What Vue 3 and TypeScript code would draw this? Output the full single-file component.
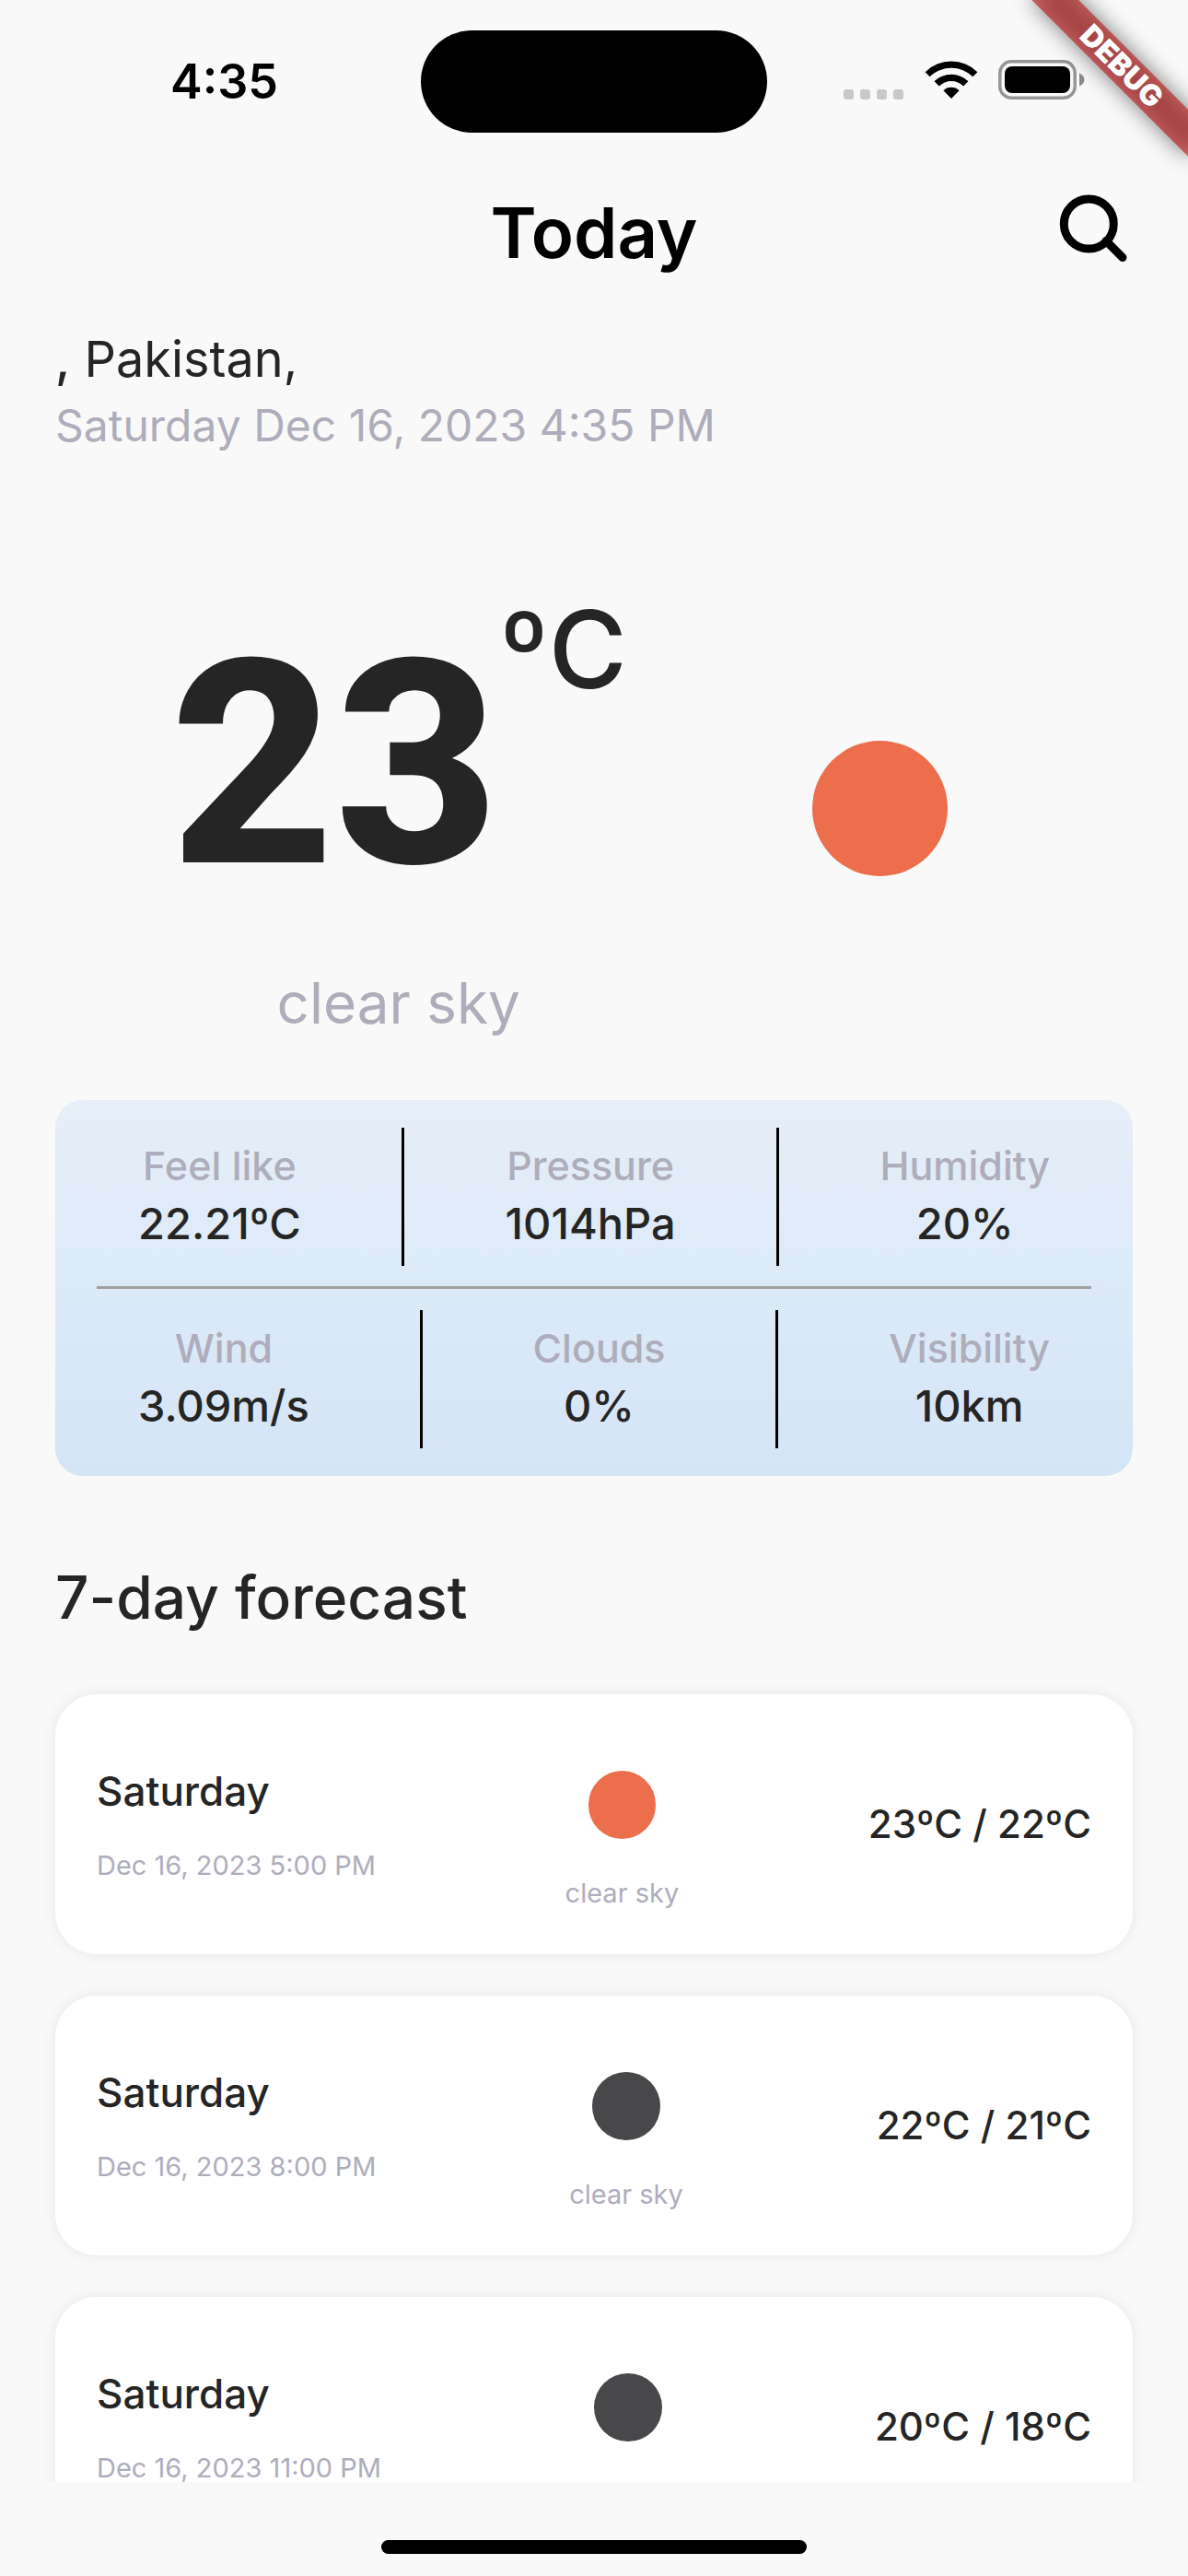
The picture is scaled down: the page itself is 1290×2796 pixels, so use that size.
<script setup lang="ts">
interface Metric {
  label: string
  value: string
}

interface Forecast {
  day: string
  time: string
  sky: string
  icon: 'sun' | 'moon'
  range: string
}

const metricRows: Metric[][] = [
  [
    { label: 'Feel like', value: '22.21ºC' },
    { label: 'Pressure', value: '1014hPa' },
    { label: 'Humidity', value: '20%' },
  ],
  [
    { label: 'Wind', value: '3.09m/s' },
    { label: 'Clouds', value: '0%' },
    { label: 'Visibility', value: '10km' },
  ],
]

const forecasts: Forecast[] = [
  { day: 'Saturday', time: 'Dec 16, 2023 5:00 PM', sky: 'clear sky', icon: 'sun', range: '23ºC / 22ºC' },
  { day: 'Saturday', time: 'Dec 16, 2023 8:00 PM', sky: 'clear sky', icon: 'moon', range: '22ºC / 21ºC' },
  { day: 'Saturday', time: 'Dec 16, 2023 11:00 PM', sky: 'clear sky', icon: 'moon', range: '20ºC / 18ºC' },
]
</script>

<template>
  <div class="screen">
    <div class="status-bar">
      <div class="status-side status-left">
        <span class="clock">4:35</span>
      </div>
      <div class="island"></div>
      <div class="status-side status-right">
        <span class="signal"><i></i><i></i><i></i><i></i></span>
        <svg class="wifi" viewBox="0 0 58 43" aria-hidden="true">
          <path d="M0.6 13.2A40.5 40.5 0 0 1 57.4 13.2L52.4 18.2A33.5 33.5 0 0 0 5.6 18.2Z" />
          <path d="M10.6 23.3A26.5 26.5 0 0 1 47.4 23.3L42.2 28.4A19 19 0 0 0 15.8 28.4Z" />
          <path d="M20.4 33.2A12.4 12.4 0 0 1 37.6 33.2L29 42Z" />
        </svg>
        <svg class="battery" viewBox="0 0 96 43" aria-hidden="true">
          <rect x="1.8" y="1.8" width="81.4" height="39.4" rx="12.5" fill="none" stroke="#969696" stroke-width="3.5" />
          <rect x="7" y="7" width="71" height="29" rx="8" fill="#000" />
          <path d="M88 14.5C95.2 17 95.2 26 88 28.5Z" fill="#8a8a8a" />
        </svg>
      </div>
    </div>

    <header class="app-bar">
      <h1 class="title">Today</h1>
      <button class="search" type="button" aria-label="Search">
        <svg viewBox="0 0 78 78" aria-hidden="true">
          <circle cx="30.3" cy="30" r="27" fill="none" stroke="#000" stroke-width="9" />
          <path d="M49 48.5L67 66.5" fill="none" stroke="#000" stroke-width="9" stroke-linecap="round" />
        </svg>
      </button>
    </header>

    <main class="content">
      <p class="place"><b>,</b> Pakistan,</p>
      <p class="date">Saturday Dec 16, 2023 4:35 PM</p>

      <section class="hero">
        <div class="reading">
          <div class="temperature">
            <span class="degrees">23</span>
            <span class="unit">ºC</span>
          </div>
          <p class="sky">clear sky</p>
        </div>
        <div class="hero-icon"><span class="disc sun"></span></div>
      </section>

      <section class="panel">
        <div v-for="(row, r) in metricRows" :key="r" class="metric-row">
          <template v-for="(metric, m) in row" :key="metric.label">
            <span v-if="m > 0" class="divider"></span>
            <div class="metric">
              <span class="metric-label">{{ metric.label }}</span>
              <span class="metric-value">{{ metric.value }}</span>
            </div>
          </template>
        </div>
      </section>

      <h2 class="section-title">7-day forecast</h2>

      <ul class="forecast">
        <li v-for="item in forecasts" :key="item.time" class="card">
          <div class="when">
            <span class="day">{{ item.day }}</span>
            <span class="small">{{ item.time }}</span>
          </div>
          <div class="outlook">
            <span class="icon-box"><span class="disc" :class="item.icon"></span></span>
            <span class="small">{{ item.sky }}</span>
          </div>
          <span class="range">{{ item.range }}</span>
        </li>
      </ul>
    </main>

    <footer class="home-area">
      <span class="home-bar"></span>
    </footer>

    <svg class="debug" viewBox="0 0 240 240" aria-label="Debug build">
      <defs>
        <filter id="debug-shadow" x="-30%" y="-200%" width="160%" height="500%">
          <feGaussianBlur stdDeviation="12" />
        </filter>
      </defs>
      <g transform="translate(240 0) rotate(45)">
        <rect x="-120" y="84" width="240" height="36" fill="#000" fill-opacity="0.5" filter="url(#debug-shadow)" />
        <rect x="-120" y="84" width="240" height="36" fill="#b71c1c" fill-opacity="0.63" />
        <text x="0" y="113" text-anchor="middle">DEBUG</text>
      </g>
    </svg>
  </div>
</template>

<style>
body {
  background: #f9f9f9;
}
</style>

<style scoped>
.screen,
.screen * {
  box-sizing: border-box;
}

.screen {
  position: relative;
  display: flex;
  flex-direction: column;
  height: 100vh;
  overflow: hidden;
  background: #f9f9f9;
  color: #252525;
  font-family: Inter, "Open Sans", sans-serif;
  font-weight: 400;
}

p,
h1,
h2,
ul {
  margin: 0;
  padding: 0;
}

.status-bar {
  display: grid;
  flex: none;
  grid-template-columns: 1fr auto 1fr;
  align-items: center;
  height: 177px;
  color: #000;
}

.status-side {
  display: flex;
  align-items: center;
}

.status-left {
  justify-content: center;
  padding-left: 30px;
}

.status-right {
  justify-content: flex-end;
  padding: 0 110px 4px 0;
}

.clock {
  font-size: 52px;
  font-weight: 600;
  line-height: 66px;
}

.island {
  width: 376px;
  height: 111px;
  border-radius: 56px;
  background: #000;
}

.signal {
  display: flex;
  align-self: flex-end;
  gap: 7px;
  margin-right: 23px;
}

.signal i {
  width: 11px;
  height: 11px;
  border-radius: 3px;
  background: #c8c8c8;
}

.wifi {
  width: 58px;
  height: 43px;
  margin-right: 22px;
}

.battery {
  width: 96px;
  height: 43px;
}

.app-bar {
  display: grid;
  flex: none;
  grid-template-columns: 1fr auto 1fr;
  align-items: center;
  height: 150px;
  padding: 0 60px;
  color: #000;
}

.title {
  grid-column: 2;
  font-size: 76px;
  font-weight: 600;
  line-height: 90px;
}

.search {
  justify-self: end;
  width: 78px;
  height: 78px;
  padding: 0;
  border: 0;
  background: none;
}

.search svg {
  display: block;
  overflow: visible;
}

.content {
  flex: 1;
  min-height: 0;
  padding: 27px 60px 0;
  overflow-y: auto;
  scrollbar-width: none;
}

.place {
  font-size: 54px;
  line-height: 72px;
}

.place b {
  font-weight: 500;
}

.date {
  color: #aeadbb;
  font-size: 48px;
  line-height: 72px;
}

.hero {
  display: flex;
  align-items: flex-start;
  justify-content: space-evenly;
  padding: 147px 0 63px;
}

.temperature {
  display: flex;
  align-items: flex-start;
  margin-bottom: 32px;
}

.degrees {
  font-family: Roboto, Inter, sans-serif;
  font-size: 310px;
  font-weight: 800;
  line-height: 370px;
}

.unit {
  font-size: 116px;
  font-weight: 500;
  line-height: 120px;
}

.sky {
  color: #aeadbb;
  font-size: 62px;
  line-height: 84px;
  text-align: center;
}

.hero-icon {
  display: grid;
  place-items: center;
  width: 300px;
  height: 300px;
  margin-top: 82px;
}

.disc {
  display: block;
  width: 49%;
  aspect-ratio: 1;
  border-radius: 50%;
}

.sun {
  background: #ec6e4c;
}

.moon {
  background: #48484a;
}

.panel {
  padding: 30px 45px;
  border-radius: 30px;
  background: linear-gradient(#e6eef8, #dceaf8 50%, #d4e5f7);
}

.metric-row {
  display: flex;
  align-items: center;
  justify-content: space-between;
  height: 150px;
  padding: 0 45px;
}

.metric-row + .metric-row {
  height: 176px;
  margin-top: 22px;
  padding-top: 23px;
  border-top: 3px solid #a0a0a0;
}

.metric {
  display: flex;
  flex-direction: column;
  align-items: center;
}

.metric-label {
  color: #aeadbb;
  font-size: 43px;
  font-weight: 500;
  line-height: 58px;
}

.metric-value {
  font-size: 47px;
  font-weight: 500;
  line-height: 68px;
}

.divider {
  width: 3px;
  height: 150px;
  background: #000;
}

.section-title {
  margin: 90px 0 63px;
  font-size: 64px;
  font-weight: 500;
  line-height: 84px;
}

.forecast {
  display: flex;
  flex-direction: column;
  gap: 45px;
  list-style: none;
}

.card {
  display: flex;
  align-items: center;
  justify-content: space-between;
  padding: 45px;
  border-radius: 45px;
  background: #fff;
  box-shadow: 0 0 15px rgba(0, 0, 0, 0.08);
}

.when {
  display: flex;
  flex-direction: column;
  gap: 30px;
}

.day {
  font-size: 44px;
  font-weight: 500;
  line-height: 60px;
}

.small {
  color: #aeadbb;
  font-size: 29px;
  line-height: 42px;
}

.outlook {
  display: flex;
  flex-direction: column;
  align-items: center;
}

.icon-box {
  display: grid;
  place-items: center;
  width: 150px;
  height: 150px;
}

.range {
  font-size: 42px;
  font-weight: 500;
  line-height: 60px;
}

.home-area {
  display: flex;
  flex: none;
  align-items: flex-end;
  justify-content: center;
  height: 102px;
  padding-bottom: 24px;
}

.home-bar {
  width: 462px;
  height: 15px;
  border-radius: 8px;
  background: #000;
}

.debug {
  position: absolute;
  top: 0;
  right: 0;
  width: 240px;
  height: 240px;
  pointer-events: none;
}

.debug text {
  fill: #fff;
  font-size: 32px;
  font-weight: 900;
}
</style>
